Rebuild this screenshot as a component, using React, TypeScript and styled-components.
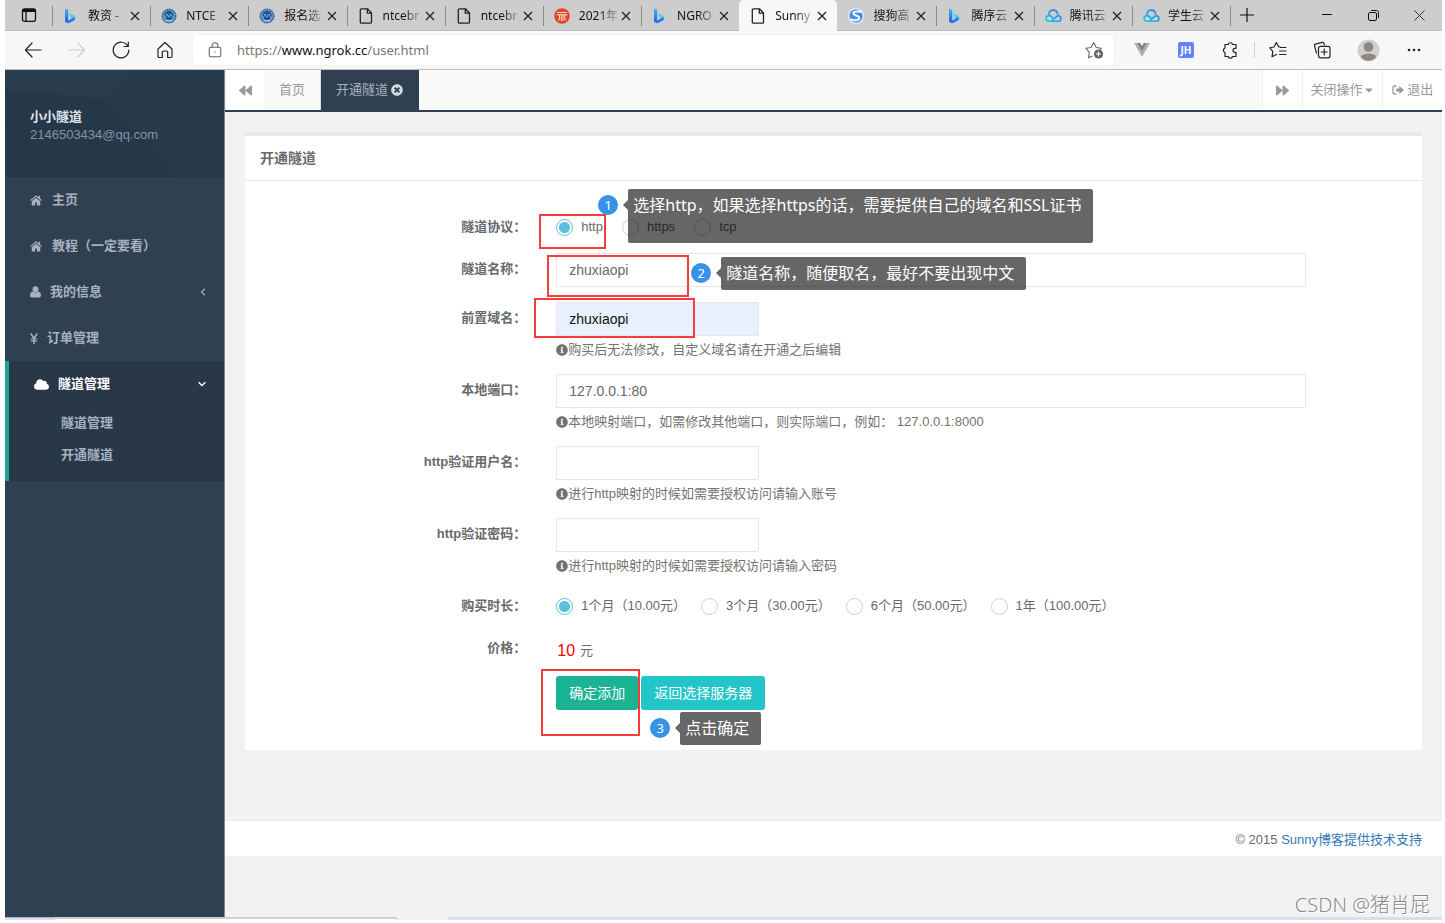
import React from "react";
import styled, { createGlobalStyle, css } from "styled-components";
import {
  FaBackward,
  FaForward,
  FaTimesCircle,
  FaCaretDown,
  FaCloud,
  FaInfoCircle,
} from "react-icons/fa";

const uiFont = `"Liberation Sans", "Noto Sans CJK SC", sans-serif`;
const chromeFont = `"Noto Sans", "Noto Sans CJK SC", sans-serif`;

const GlobalStyle = createGlobalStyle`
  *, *::before, *::after { box-sizing: border-box; }
  body {
    margin: 0;
    background: #fff;
    color: #676a6c;
    font: 13px/18px ${uiFont};
  }
  button, input { font: inherit; color: inherit; }
  button { margin: 0; padding: 0; border: 0; background: none; cursor: pointer; }
  a { color: inherit; text-decoration: none; }
  svg { display: block; flex: none; }
  ul { list-style: none; margin: 0; padding: 0; }
`;

const Frame = styled.div`
  position: relative;
  display: flex;
  flex-direction: column;
  min-height: calc(100vh - 3px);
  margin: 0 3px 3px 5px;
`;

/* ---------- browser chrome ---------- */

const TabStrip = styled.header`
  display: flex;
  height: 31px;
  background: #cdcdcd;
  border-bottom: 1px solid #bdbdbd;
  color: #111;
  font-family: ${chromeFont};
  font-size: 12px;
`;

const TabActions = styled.button`
  display: flex;
  align-items: center;
  justify-content: center;
  width: 47px;
  flex: none;
`;

const BrowserTabs = styled.div`
  display: flex;
  flex: 0 1 1178px;
  min-width: 0;
`;

const BrowserTab = styled.div<{ $active?: boolean; $plain?: boolean }>`
  position: relative;
  display: flex;
  align-items: center;
  flex: 1 1 0;
  min-width: 0;
  height: 31px;
  padding: 0 8px 0 11px;
  &::before {
    content: "";
    position: absolute;
    left: 0;
    top: 6px;
    width: 1px;
    height: 20px;
    background: #8a8a8a;
  }
  ${(p) => p.$plain && css`&::before { display: none; }`}
  ${(p) =>
    p.$active &&
    css`
      background: #f7f7f7;
      border-radius: 5px 5px 0 0;
      &::before { display: none; }
    `}
`;

const TabIcon = styled.span`
  display: flex;
  align-items: center;
  flex: none;
  width: 16px;
`;

const TabTitle = styled.span`
  flex: 1;
  min-width: 0;
  margin-left: 9px;
  white-space: nowrap;
  mask-image: linear-gradient(to right, #000 50%, rgba(0, 0, 0, 0.1) 100%);
`;

const TabClose = styled.button`
  display: flex;
  align-items: center;
  justify-content: center;
  width: 14px;
  height: 16px;
`;

const NewTab = styled.button`
  position: relative;
  display: flex;
  align-items: center;
  justify-content: center;
  width: 34px;
  flex: none;
  &::before {
    content: "";
    position: absolute;
    left: 0;
    top: 6px;
    width: 1px;
    height: 20px;
    background: #8a8a8a;
  }
`;

const WindowButtons = styled.div`
  display: flex;
  margin-left: auto;
`;

const WindowButton = styled.button`
  display: flex;
  align-items: center;
  justify-content: center;
  width: 46px;
  height: 30px;
`;

const Toolbar = styled.div`
  display: flex;
  align-items: center;
  height: 39px;
  padding: 0 6px;
  background: #f7f7f7;
  border-bottom: 1px solid #bdbdbd;
`;

const ToolButton = styled.button<{ $wide?: boolean }>`
  display: flex;
  align-items: center;
  justify-content: center;
  flex: none;
  width: ${(p) => (p.$wide ? 48 : 44)}px;
  height: 38px;
  color: #222;
`;

const AddressBar = styled.div`
  display: flex;
  align-items: center;
  flex: 1;
  min-width: 0;
  height: 30px;
  margin: 0 6px;
  padding: 0 10px 0 14px;
  gap: 14px;
  border-radius: 4px;
  background: #fff;
  box-shadow: 0 0 2px rgba(0, 0, 0, 0.08);
`;

const Url = styled.span`
  flex: 1;
  font: 13px/20px ${chromeFont};
  color: #767676;
  white-space: nowrap;
  b { font-weight: 400; color: #111; }
`;

const ToolDivider = styled.span`
  width: 1px;
  height: 16px;
  margin: 0 1px 0 2px;
  background: #d0d0d0;
`;

/* ---------- sidebar ---------- */

const Body = styled.div`
  display: flex;
  flex: 1;
`;

const Sidebar = styled.nav`
  flex: none;
  width: 220px;
  background: #2f4050;
  border-right: 1px solid #7f8a95;
  color: #a7b1c2;
  font-weight: 700;
`;

const Profile = styled.div`
  position: relative;
  height: 107px;
  padding: 38px 25px 0;
  background: #263949;
  overflow: hidden;
`;

const ProfileArt = styled.svg`
  position: absolute;
  inset: 0;
  width: 100%;
  height: 100%;
`;

const ProfileName = styled.div`
  position: relative;
  color: #dfe4ed;
`;

const ProfileMail = styled.div`
  position: relative;
  color: #8095a8;
  font-weight: 400;
`;

const NavLink = styled.a<{ $open?: boolean }>`
  display: flex;
  align-items: center;
  gap: 9px;
  height: 46px;
  padding: 0 18px 0 25px;
  ${(p) => p.$open && css`color: #fff;`}
  svg:last-child:not(:first-child) { margin-left: auto; }
`;

const NavGroup = styled.li`
  padding-bottom: 10px;
  background: #293846;
  border-left: 4px solid #19aa8d;
`;

const SubLink = styled.a`
  display: flex;
  align-items: center;
  height: 32px;
  padding-left: 52px;
`;

/* ---------- page tabs ---------- */

const Page = styled.div`
  flex: 1;
  min-width: 0;
  background: #f2f2f2;
`;

const PageTabs = styled.div`
  display: flex;
  height: 42px;
  background: #fafafa;
  border-bottom: 2px solid #2f4050;
  color: #999;
`;

const PageTabButton = styled.button<{ $width: number }>`
  display: flex;
  align-items: center;
  justify-content: center;
  flex: none;
  width: ${(p) => p.$width}px;
  background: #fff;
  border-left: 1px solid #eee;
  white-space: nowrap;
`;

const PageTab = styled.a<{ $active?: boolean }>`
  display: flex;
  align-items: center;
  gap: 3px;
  padding: 0 15px;
  border-right: 1px solid #ddd;
  ${(p) =>
    p.$active &&
    css`
      background: #2f4050;
      border-color: #2f4050;
      color: #a7b1c2;
      svg { color: #d5d8dc; }
    `}
`;

const TabsSpacer = styled.div`
  flex: 1;
`;

/* ---------- form ---------- */

const Content = styled.main`
  padding: 20px 20px 70px;
`;

const Card = styled.section`
  background: #fff;
  border-top: 4px solid #e7eaec;
`;

const CardTitle = styled.h1`
  margin: 0;
  padding: 13px 15px;
  border-bottom: 1px solid #e7eaec;
  font-size: 14px;
  line-height: 18px;
  font-weight: 700;
`;

const Form = styled.form`
  padding: 30px 4px 25px;
`;

const Row = styled.div<{ $height?: number }>`
  display: flex;
  min-height: ${(p) => p.$height ?? 34}px;
  margin-bottom: 15px;
`;

const Label = styled.label`
  width: 25%;
  padding: 7px 15px 0;
  text-align: right;
  font-weight: 700;
`;

const FieldColumn = styled.div`
  width: 66.6667%;
  padding: 0 15px;
`;

const Field = styled.div`
  position: relative;
`;

const TextInput = styled.input<{ $short?: boolean; $filled?: boolean }>`
  display: block;
  width: ${(p) => (p.$short ? "203px" : "100%")};
  max-width: 100%;
  height: 34px;
  padding: 6px 12px;
  border: 1px solid #e5e6e7;
  border-radius: 1px;
  outline: 0;
  background: ${(p) => (p.$filled ? "#e8f0fe" : "#fff")};
  color: ${(p) => (p.$filled ? "#111" : "#676a6c")};
  font-size: 14px;
`;

const Help = styled.p`
  display: flex;
  align-items: center;
  margin: 5px 0 0;
  color: #737373;
`;

const RadioGroup = styled.div<{ $gap: number }>`
  display: flex;
  flex-wrap: wrap;
  gap: ${(p) => p.$gap}px;
  padding-top: 7px;
`;

const RadioLabel = styled.label`
  display: flex;
  align-items: center;
  gap: 8px;
  white-space: nowrap;
`;

const Radio = styled.input`
  appearance: none;
  width: 17px;
  height: 17px;
  margin: 0;
  border: 1px solid #cfcfcf;
  border-radius: 50%;
  background: #fff;
  &:checked {
    border-color: #5bc0de;
    background: radial-gradient(circle, #5bc0de 5px, #fff 6px);
  }
`;

const Price = styled.div`
  display: flex;
  align-items: center;
  gap: 5px;
  padding: 10px 0 0 1px;
  strong { color: #f00; font-size: 16px; font-weight: 400; }
`;

const ButtonRow = styled.div`
  display: flex;
  gap: 3px;
`;

const ActionButton = styled.button<{ $color: string }>`
  height: 34px;
  padding: 0 13px;
  border-radius: 3px;
  background: ${(p) => p.$color};
  color: #fff;
  font-size: 14px;
`;

/* ---------- walkthrough marks ---------- */

interface Box {
  $x: number;
  $y: number;
  $w?: number;
  $h?: number;
}

const Mark = styled.div<Box>`
  position: absolute;
  z-index: 2;
  left: ${(p) => p.$x}px;
  top: ${(p) => p.$y}px;
  width: ${(p) => p.$w}px;
  height: ${(p) => p.$h}px;
  border: 2px solid #fb3b3b;
  pointer-events: none;
`;

const Step = styled.div<Box>`
  position: absolute;
  z-index: 3;
  left: ${(p) => p.$x}px;
  top: ${(p) => p.$y}px;
  display: flex;
  align-items: flex-start;
  gap: 10px;
  pointer-events: none;
`;

const StepNumber = styled.span`
  width: 20px;
  height: 20px;
  margin-top: 6px;
  border-radius: 50%;
  background: #3592e6;
  color: #fff;
  font: 13px/20px ${chromeFont};
  text-align: center;
`;

const StepText = styled.span<{ $tall?: boolean }>`
  position: relative;
  min-height: ${(p) => (p.$tall ? 54 : 33)}px;
  padding: 5px 12px 5px 5px;
  border-radius: 2px;
  background: rgba(0, 0, 0, 0.6);
  color: #fff;
  font: 16px/23px ${chromeFont};
  white-space: nowrap;
  &::before {
    content: "";
    position: absolute;
    right: 100%;
    top: 11px;
    border: 5px solid transparent;
    border-left: 0;
    border-right-color: rgba(0, 0, 0, 0.6);
  }
`;

/* ---------- footer ---------- */

const Footer = styled.footer`
  padding: 10px 20px 7px;
  border-top: 1px solid #e7eaec;
  background: #fff;
  text-align: right;
  a { color: #337ab7; }
`;

const Watermark = styled.div`
  position: absolute;
  right: 12px;
  bottom: 1px;
  color: #8c8c8c;
  font: 20px/28px ${chromeFont};
  font-weight: 300;
  text-shadow: 1px 1px 0 #fff;
`;

const BottomStrip = styled.div`
  display: flex;
  height: 3px;
  background: #d3e1e8;
`;

const StripStart = styled.span`
  width: 49px;
  border-top: 1px solid #a9b4c4;
  background: #d5e0ec;
`;

const StripPanel = styled.span`
  width: 343px;
  border: solid #cfcfcf;
  border-width: 2px 1px 0;
  background: #fff;
`;

const StripPale = styled.span`
  width: 51px;
  background: #e9f3f6;
`;

/* ---------- icons ---------- */

type Stroke = { size?: number; w?: number; color?: string; children: React.ReactNode };
const Line = ({ size = 18, w = 1.2, color = "currentColor", children }: Stroke) => (
  <svg width={size} height={size} viewBox="0 0 18 18" fill="none" stroke={color} strokeWidth={w} strokeLinecap="round" strokeLinejoin="round">
    {children}
  </svg>
);

const CrossIcon = () => (
  <svg width="10" height="10" viewBox="0 0 10 10" stroke="#222" strokeWidth="1.3">
    <path d="M1 1l8 8M9 1L1 9" />
  </svg>
);

const BingIcon = () => (
  <svg width="16" height="16" viewBox="0 0 16 16">
    <defs>
      <linearGradient id="bing" x1="0" y1="0" x2="0" y2="1">
        <stop offset="0" stopColor="#3fb4f8" />
        <stop offset="1" stopColor="#2459e0" />
      </linearGradient>
    </defs>
    <path d="M2 0.600L5.200 1.700v10.700L3.500 14.500 2 13z" fill="url(#bing)" />
    <path d="M6 5.400l4.900 2.200c2 1.200 2 3.400.6 4.800L9 10.900 7.400 8.900z" fill="#41d0f0" />
    <path d="M2 12.400c.4 2.400 2.800 3.400 4.700 2.400l4-2.200c1.200-.8 1.400-2.200.6-3.400L5.200 12.500z" fill="#2a74f2" />
  </svg>
);

const SealIcon = () => (
  <svg width="16" height="16" viewBox="0 0 17 17">
    <circle cx="8.500" cy="8.500" r="8" fill="#7ba3c8" />
    <circle cx="8.500" cy="8.500" r="7" fill="none" stroke="#2a5f98" strokeWidth="1.600" strokeDasharray="1.500 1" />
    <circle cx="8.500" cy="8" r="5" fill="#1f5694" />
    <path d="M4 10.800l2.600-4.500 1.900 3.500 1.900-3.500 2.600 4.500" fill="none" stroke="#8fb4d8" strokeWidth=".9" />
    <path d="M5 13.500h7" stroke="#c5d8ea" strokeWidth="1" />
  </svg>
);

const PageIcon = () => (
  <svg width="16" height="16" viewBox="0 0 16 16" fill="none" stroke="#222" strokeWidth="1.300" strokeLinejoin="round">
    <path d="M3.500.8h6l4 4.200v9c0 .7-.5 1.200-1.200 1.200H3.500c-.7 0-1.200-.5-1.200-1.200V2c0-.7.5-1.200 1.200-1.200z" />
    <path d="M9.300 1v4.200h4.200" />
  </svg>
);

const RedIcon = () => (
  <svg width="16" height="16" viewBox="0 0 16 16">
    <circle cx="8" cy="8" r="7.800" fill="#e2452d" />
    <g fill="none" stroke="#fbd9d0" strokeWidth="1">
      <path d="M3 4.500h10M2.500 6.800h11M5.500 7v4.500l-1.500 1M7.300 7v6M9 7v6M10.700 7v4.500l1.500 1" />
    </g>
  </svg>
);

const SogouIcon = () => (
  <svg width="16" height="16" viewBox="0 0 16 16">
    <circle cx="8" cy="8" r="7.800" fill="#f3f6fa" />
    <circle cx="8" cy="8" r="6.700" fill="#3d8fe8" />
    <path d="M14 3.800C11 3.400 5.600 2.900 5.400 5.300c-.1 2.600 6 2 5.800 5-.1 2.400-5 2.500-9 .9" fill="none" stroke="#f3f6fa" strokeWidth="2.200" />
  </svg>
);

const TencentIcon = () => (
  <svg width="17" height="14" viewBox="0 0 17 14" fill="none" strokeWidth="1.600">
    <defs>
      <linearGradient id="tc" x1="0" y1="1" x2="1" y2="0">
        <stop offset="0" stopColor="#15cfe0" />
        <stop offset="1" stopColor="#1f78f2" />
      </linearGradient>
    </defs>
    <path d="M6.300 12.300l5-4.700c2-1.700 4.700-.3 4.700 1.900 0 1.600-1.300 2.800-3 2.800H4c-1.800 0-3-1.300-3-2.900 0-2.700 3.300-3.700 5.400-1.700l1.800 1.700M3.800 6.300C3.600-.2 11.800-.8 12.900 5.600" stroke="url(#tc)" />
  </svg>
);

const VueIcon = () => (
  <svg width="16" height="14" viewBox="0 0 16 14">
    <path d="M0 0h6l2 3 2-3h6L8 14z" fill="#b0b0b0" />
    <path d="M3.300 0H6l2 3.200L10 0h2.700L8 8.200z" fill="#858585" />
  </svg>
);

const JhBadge = styled.span`
  width: 16px;
  height: 16px;
  border-radius: 2px;
  background: #6283f5;
  color: #fff;
  font: 700 10px/16px ${chromeFont};
  text-align: center;
`;

const SignOutIcon = () => (
  <svg width="12" height="11" viewBox="0 0 12 11">
    <path d="M4.500 1H2.400C1.600 1 1 1.600 1 2.400v5.200C1 8.400 1.600 9 2.400 9h2.100" fill="none" stroke="#999" strokeWidth="1.300" />
    <path d="M4.200 3.500h3V1L12 5 7.200 9V6.600h-3z" fill="#999" />
  </svg>
);

const HouseIcon = () => (
  <svg width="13" height="11" viewBox="0 0 13 11" fill="currentColor">
    <path d="M6 .2L0 5.200l.7.8L6 1.700 11.300 6l.7-.8-1.900-1.600V.8H8.500v1.500z" />
    <path d="M6 2.700L1.700 6.200V10c0 .3.2.5.5.5h2.900V7.400h1.800v3.100h2.900c.3 0 .5-.2.500-.5V6.200z" />
  </svg>
);

const PersonIcon = () => (
  <svg width="11" height="12" viewBox="0 0 11 12" fill="currentColor">
    <circle cx="5.500" cy="3.300" r="3" />
    <path d="M2.800 5.400C1 5.600 0 7.300 0 9.500c0 1.300.8 2 2 2h7c1.200 0 2-.7 2-2 0-2.200-1-3.900-2.800-4.100-1.500 1.500-3.900 1.500-5.400 0z" />
  </svg>
);

const YenIcon = () => (
  <svg width="8" height="11" viewBox="0 0 8 11" fill="none" stroke="currentColor" strokeWidth="1.500">
    <path d="M.8.500L4 5.500 7.200.5M4 5.500V11" />
    <path d="M.8 5.700h6.400M.8 7.900h6.400" strokeWidth="1.100" />
  </svg>
);

const ChevronLeft = () => (
  <svg width="6" height="8" viewBox="0 0 6 8" fill="none" stroke="currentColor" strokeWidth="1.200"><path d="M4.800.8L1.500 4l3.300 3.200" /></svg>
);

const ChevronDown = () => (
  <svg width="8" height="6" viewBox="0 0 8 6" fill="none" stroke="currentColor" strokeWidth="1.300"><path d="M.6 1.200L4 4.500l3.400-3.300" /></svg>
);

/* ---------- data ---------- */

const browserTabs: { title: string; icon: React.ReactNode; active?: boolean }[] = [
  { title: "教资 -", icon: <BingIcon /> },
  { title: "NTCE", icon: <SealIcon /> },
  { title: "报名选", icon: <SealIcon /> },
  { title: "ntcebr", icon: <PageIcon /> },
  { title: "ntcebr", icon: <PageIcon /> },
  { title: "2021年", icon: <RedIcon /> },
  { title: "NGRO", icon: <BingIcon /> },
  { title: "Sunny", icon: <PageIcon />, active: true },
  { title: "搜狗高", icon: <SogouIcon /> },
  { title: "腾序云", icon: <BingIcon /> },
  { title: "腾讯云", icon: <TencentIcon /> },
  { title: "学生云", icon: <TencentIcon /> },
];

const durations = ["1个月（10.00元）", "3个月（30.00元）", "6个月（50.00元）", "1年（100.00元）"];

const HelpText = ({ children }: { children: React.ReactNode }) => (
  <Help>
    <FaInfoCircle size={12} />
    {children}
  </Help>
);

export default function App() {
  return (
    <>
      <GlobalStyle />
      <Frame>
        <TabStrip>
          <TabActions aria-label="标签页操作">
            <svg width="16" height="16" viewBox="0 0 16 16" fill="none" stroke="#111" strokeWidth="1.300">
              <rect x="1.500" y="1.800" width="13" height="12.500" rx="2" />
              <path d="M1.500 3.500h13" strokeWidth="3" />
              <path d="M5 5v9" />
            </svg>
          </TabActions>
          <BrowserTabs>
            {browserTabs.map((t, i) => (
              <BrowserTab key={i} $active={t.active} $plain={browserTabs[i - 1]?.active}>
                <TabIcon>{t.icon}</TabIcon>
                <TabTitle>{t.title}</TabTitle>
                <TabClose aria-label="关闭标签页"><CrossIcon /></TabClose>
              </BrowserTab>
            ))}
          </BrowserTabs>
          <NewTab aria-label="新建标签页">
            <svg width="14" height="14" viewBox="0 0 14 14" stroke="#111" strokeWidth="1.200"><path d="M7 0v14M0 7h14" /></svg>
          </NewTab>
          <WindowButtons>
            <WindowButton aria-label="最小化">
              <svg width="10" height="10" viewBox="0 0 10 10" stroke="#111"><path d="M0 4.500h10" /></svg>
            </WindowButton>
            <WindowButton aria-label="还原">
              <svg width="11" height="11" viewBox="0 0 11 11" fill="none" stroke="#111">
                <rect x=".5" y="2.500" width="8" height="8" rx="1.500" />
                <path d="M3 .5h5.500c1.100 0 2 .9 2 2V8" />
              </svg>
            </WindowButton>
            <WindowButton aria-label="关闭">
              <svg width="11" height="11" viewBox="0 0 11 11" stroke="#333"><path d="M.5.5l10 10M10.500.5l-10 10" /></svg>
            </WindowButton>
          </WindowButtons>
        </TabStrip>

        <Toolbar>
          <ToolButton aria-label="后退"><Line><path d="M17 9H1.500M8 2L1.500 9 8 16" /></Line></ToolButton>
          <ToolButton aria-label="前进"><Line color="#cdcdcd"><path d="M1 9h15.500M10 2l6.500 7L10 16" /></Line></ToolButton>
          <ToolButton aria-label="刷新">
            <Line><path d="M15.800 5.200A7.800 7.800 0 1 0 16.800 9M16.300 1.200v4.300h-4.300" /></Line>
          </ToolButton>
          <ToolButton aria-label="主页">
            <Line><path d="M2 8l7-6.500L16 8v7.300c0 .7-.4 1.200-1.100 1.200h-3.200v-5.200c0-.8-.5-1.300-1.300-1.300H7.600c-.8 0-1.300.5-1.300 1.300v5.200H3.100c-.7 0-1.100-.5-1.100-1.200z" /></Line>
          </ToolButton>
          <AddressBar>
            <Line size={16} color="#666"><rect x="2.500" y="6" width="13" height="10.500" rx="1.500" /><path d="M5.800 6V4a3.200 3.200 0 0 1 6.400 0v2M9 11v.6" /></Line>
            <Url>https://<b>www.ngrok.cc</b>/user.html</Url>
            <svg width="19" height="18" viewBox="0 0 19 18" fill="none" stroke="#666" strokeWidth="1.100" strokeLinejoin="round">
              <path d="M7.500 15l-4 1.800.8-5.500L1 7.300l5-.8L8.700 1.500l2.600 5 5 .8-1.500 1.500" />
              <circle cx="13.500" cy="13" r="4.600" fill="#666" stroke="none" />
              <path d="M13.500 10.500v5M11 13h5" stroke="#fff" />
            </svg>
          </AddressBar>
          <ToolButton aria-label="Vue"><VueIcon /></ToolButton>
          <ToolButton><JhBadge>JH</JhBadge></ToolButton>
          <ToolButton aria-label="扩展">
            <Line><path d="M4 3.500h3.200a2.200 2.200 0 0 1 4.300 0H15v3.800h-1a2 2 0 0 0 0 4h1v4.200h-3.500a2.200 2.200 0 0 1-4.300 0H4v-4a2.300 2.300 0 0 1 0-4.400z" /></Line>
          </ToolButton>
          <ToolDivider />
          <ToolButton aria-label="收藏夹">
            <Line><path d="M11 5.800L9.800 6 7.300 1.500 5 6 .8 6.800l3 3.500-.8 5.500 4.500-2.300M11.500 6.500H17M10.500 10H17M10.500 13.500H17" /></Line>
          </ToolButton>
          <ToolButton aria-label="集锦">
            <Line><path d="M3.500 12.200l-2-7.500c-.2-.8.200-1.400 1-1.600L9.300 1.300c.8-.2 1.400.2 1.600 1l.5 1.500" /><rect x="5.500" y="5.300" width="11.500" height="11.500" rx="2" /><path d="M11.250 8v6M8.250 11h6" /></Line>
          </ToolButton>
          <ToolButton $wide aria-label="个人资料">
            <svg width="23" height="23" viewBox="0 0 23 23">
              <circle cx="11.500" cy="11.500" r="11" fill="#d1cfcb" />
              <circle cx="11.500" cy="8" r="4.800" fill="#8b8783" />
              <path d="M4 18c0-4.500 15-4.500 15 0-3.500 5-11.500 5-15 0z" fill="#8b8783" />
            </svg>
          </ToolButton>
          <ToolButton aria-label="设置及其他">
            <svg width="14" height="4" viewBox="0 0 14 4" fill="#222"><circle cx="2" cy="2" r="1.300" /><circle cx="7" cy="2" r="1.300" /><circle cx="12" cy="2" r="1.300" /></svg>
          </ToolButton>
        </Toolbar>

        <Body>
          <Sidebar>
            <Profile>
              <ProfileArt viewBox="0 0 219 107" preserveAspectRatio="none" aria-hidden="true">
                <path d="M0 0h125L100 28 0 20z" fill="#293d4c" />
                <path d="M125 0h94v72L100 28z" fill="#283b4a" />
                <path d="M100 28l70 79H20L0 50z" fill="#253847" />
                <path d="M100 28l119 44v35h-49z" fill="#273a49" />
              </ProfileArt>
              <ProfileName>小小隧道</ProfileName>
              <ProfileMail>2146503434@qq.com</ProfileMail>
            </Profile>
            <ul>
              <li><NavLink href="#home"><HouseIcon />主页</NavLink></li>
              <li><NavLink href="#guide"><HouseIcon />教程（一定要看）</NavLink></li>
              <li><NavLink href="#info"><PersonIcon />我的信息<ChevronLeft /></NavLink></li>
              <li><NavLink href="#orders"><YenIcon />订单管理</NavLink></li>
              <NavGroup>
                <NavLink href="#tunnels" $open><FaCloud size={15} />隧道管理<ChevronDown /></NavLink>
                <SubLink href="#tunnels-list">隧道管理</SubLink>
                <SubLink href="#tunnels-open">开通隧道</SubLink>
              </NavGroup>
            </ul>
          </Sidebar>

          <Page>
            <PageTabs>
              <PageTabButton $width={39} aria-label="向左"><FaBackward size={13} /></PageTabButton>
              <PageTab href="#home">首页</PageTab>
              <PageTab href="#open" $active>开通隧道<FaTimesCircle size={12} /></PageTab>
              <TabsSpacer />
              <PageTabButton $width={40} aria-label="向右"><FaForward size={13} /></PageTabButton>
              <PageTabButton $width={80}>关闭操作<FaCaretDown size={12} /></PageTabButton>
              <PageTabButton $width={60}><SignOutIcon />&nbsp;退出</PageTabButton>
            </PageTabs>

            <Content>
              <Card>
                <CardTitle>开通隧道</CardTitle>
                <Form onSubmit={(e) => e.preventDefault()}>
                  <Row $height={27}>
                    <Label as="span" id="protocol">隧道协议：</Label>
                    <FieldColumn>
                      <Field>
                        <RadioGroup $gap={19} role="radiogroup" aria-labelledby="protocol">
                          {["http", "https", "tcp"].map((p, i) => (
                            <RadioLabel key={p}><Radio type="radio" name="protocol" defaultChecked={i === 0} />{p}</RadioLabel>
                          ))}
                        </RadioGroup>
                        <Mark $x={-17} $y={3} $w={67} $h={35} />
                        <Step $x={42} $y={-22}>
                          <StepNumber>1</StepNumber>
                          <StepText $tall>选择http，如果选择https的话，需要提供自己的域名和SSL证书</StepText>
                        </Step>
                      </Field>
                    </FieldColumn>
                  </Row>
                  <Row>
                    <Label htmlFor="name">隧道名称：</Label>
                    <FieldColumn>
                      <Field>
                        <TextInput id="name" defaultValue="zhuxiaopi" />
                        <Mark $x={-9} $y={2} $w={142} $h={42} />
                        <Step $x={135} $y={4}>
                          <StepNumber>2</StepNumber>
                          <StepText>隧道名称，随便取名，最好不要出现中文</StepText>
                        </Step>
                      </Field>
                    </FieldColumn>
                  </Row>
                  <Row>
                    <Label htmlFor="domain">前置域名：</Label>
                    <FieldColumn>
                      <Field>
                        <TextInput id="domain" $short $filled defaultValue="zhuxiaopi" />
                        <HelpText>购买后无法修改，自定义域名请在开通之后编辑</HelpText>
                        <Mark $x={-22} $y={-4} $w={161} $h={40} />
                      </Field>
                    </FieldColumn>
                  </Row>
                  <Row>
                    <Label htmlFor="port">本地端口：</Label>
                    <FieldColumn>
                      <TextInput id="port" defaultValue="127.0.0.1:80" />
                      <HelpText>本地映射端口，如需修改其他端口，则实际端口，例如： 127.0.0.1:8000</HelpText>
                    </FieldColumn>
                  </Row>
                  <Row>
                    <Label htmlFor="user">http验证用户名：</Label>
                    <FieldColumn>
                      <TextInput id="user" $short />
                      <HelpText>进行http映射的时候如需要授权访问请输入账号</HelpText>
                    </FieldColumn>
                  </Row>
                  <Row>
                    <Label htmlFor="pass">http验证密码：</Label>
                    <FieldColumn>
                      <TextInput id="pass" type="password" $short />
                      <HelpText>进行http映射的时候如需要授权访问请输入密码</HelpText>
                    </FieldColumn>
                  </Row>
                  <Row $height={27}>
                    <Label as="span" id="duration">购买时长：</Label>
                    <FieldColumn>
                      <RadioGroup $gap={15} role="radiogroup" aria-labelledby="duration">
                        {durations.map((d, i) => (
                          <RadioLabel key={d}><Radio type="radio" name="duration" defaultChecked={i === 0} />{d}</RadioLabel>
                        ))}
                      </RadioGroup>
                    </FieldColumn>
                  </Row>
                  <Row $height={29}>
                    <Label as="span">价格：</Label>
                    <FieldColumn>
                      <Price><strong>10</strong>元</Price>
                    </FieldColumn>
                  </Row>
                  <Row>
                    <Label as="span" />
                    <FieldColumn>
                      <Field>
                        <ButtonRow>
                          <ActionButton type="submit" $color="#1ab394">确定添加</ActionButton>
                          <ActionButton type="button" $color="#23c6c8">返回选择服务器</ActionButton>
                        </ButtonRow>
                        <Mark $x={-15} $y={-7} $w={99} $h={67} />
                        <Step $x={94} $y={36}>
                          <StepNumber>3</StepNumber>
                          <StepText>点击确定</StepText>
                        </Step>
                      </Field>
                    </FieldColumn>
                  </Row>
                </Form>
              </Card>
            </Content>

            <Footer>© 2015 <a href="#blog">Sunny博客提供技术支持</a></Footer>
          </Page>
        </Body>

        <BottomStrip>
          <StripStart />
          <StripPanel />
          <StripPale />
        </BottomStrip>
        <Watermark>CSDN @猪肖屁</Watermark>
      </Frame>
    </>
  );
}
